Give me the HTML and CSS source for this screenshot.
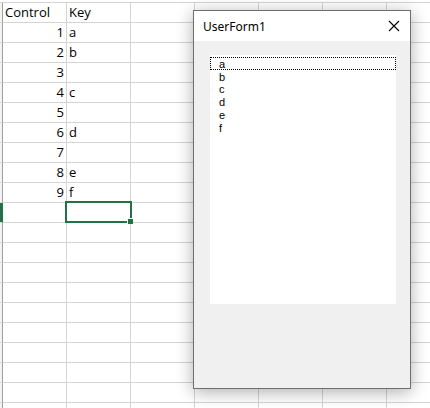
FILE: index.html
```html
<!DOCTYPE html>
<html>
<head>
<meta charset="utf-8">
<link rel="stylesheet" href="styles.css">
</head>
<body>
<div class="sheet">
  <div class="rh"></div><div class="c">Control</div><div class="c">Key</div><div class="c"></div><div class="c"></div><div class="c"></div><div class="c"></div><div class="c"></div>
  <div class="rh"></div><div class="c num">1</div><div class="c">a</div><div class="c"></div><div class="c"></div><div class="c"></div><div class="c"></div><div class="c"></div>
  <div class="rh"></div><div class="c num">2</div><div class="c">b</div><div class="c"></div><div class="c"></div><div class="c"></div><div class="c"></div><div class="c"></div>
  <div class="rh"></div><div class="c num">3</div><div class="c"></div><div class="c"></div><div class="c"></div><div class="c"></div><div class="c"></div><div class="c"></div>
  <div class="rh"></div><div class="c num">4</div><div class="c">c</div><div class="c"></div><div class="c"></div><div class="c"></div><div class="c"></div><div class="c"></div>
  <div class="rh"></div><div class="c num">5</div><div class="c"></div><div class="c"></div><div class="c"></div><div class="c"></div><div class="c"></div><div class="c"></div>
  <div class="rh"></div><div class="c num">6</div><div class="c">d</div><div class="c"></div><div class="c"></div><div class="c"></div><div class="c"></div><div class="c"></div>
  <div class="rh"></div><div class="c num">7</div><div class="c"></div><div class="c"></div><div class="c"></div><div class="c"></div><div class="c"></div><div class="c"></div>
  <div class="rh"></div><div class="c num">8</div><div class="c">e</div><div class="c"></div><div class="c"></div><div class="c"></div><div class="c"></div><div class="c"></div>
  <div class="rh"></div><div class="c num">9</div><div class="c">f</div><div class="c"></div><div class="c"></div><div class="c"></div><div class="c"></div><div class="c"></div>
  <div class="rh active"></div><div class="c"></div><div class="c sel"><span class="selbox"><span class="handle"></span></span></div><div class="c"></div><div class="c"></div><div class="c"></div><div class="c"></div><div class="c"></div>
  <div class="rh"></div><div class="c"></div><div class="c"></div><div class="c"></div><div class="c"></div><div class="c"></div><div class="c"></div><div class="c"></div>
  <div class="rh"></div><div class="c"></div><div class="c"></div><div class="c"></div><div class="c"></div><div class="c"></div><div class="c"></div><div class="c"></div>
  <div class="rh"></div><div class="c"></div><div class="c"></div><div class="c"></div><div class="c"></div><div class="c"></div><div class="c"></div><div class="c"></div>
  <div class="rh"></div><div class="c"></div><div class="c"></div><div class="c"></div><div class="c"></div><div class="c"></div><div class="c"></div><div class="c"></div>
  <div class="rh"></div><div class="c"></div><div class="c"></div><div class="c"></div><div class="c"></div><div class="c"></div><div class="c"></div><div class="c"></div>
  <div class="rh"></div><div class="c"></div><div class="c"></div><div class="c"></div><div class="c"></div><div class="c"></div><div class="c"></div><div class="c"></div>
  <div class="rh"></div><div class="c"></div><div class="c"></div><div class="c"></div><div class="c"></div><div class="c"></div><div class="c"></div><div class="c"></div>
  <div class="rh"></div><div class="c"></div><div class="c"></div><div class="c"></div><div class="c"></div><div class="c"></div><div class="c"></div><div class="c"></div>
  <div class="rh"></div><div class="c"></div><div class="c"></div><div class="c"></div><div class="c"></div><div class="c"></div><div class="c"></div><div class="c"></div>
  <div class="rh"></div><div class="c"></div><div class="c"></div><div class="c"></div><div class="c"></div><div class="c"></div><div class="c"></div><div class="c"></div>
</div>

<div class="form">
  <div class="titlebar">
    <span class="title">UserForm1</span>
    <svg class="close" width="12" height="12" viewBox="0 0 12 12"><path d="M1 1 L11 11 M11 1 L1 11" stroke="#000" stroke-width="1.1" fill="none"/></svg>
  </div>
  <div class="formbody">
    <div class="listbox">
      <div class="item focus">a</div>
      <div class="item">b</div>
      <div class="item">c</div>
      <div class="item">d</div>
      <div class="item">e</div>
      <div class="item">f</div>
    </div>
  </div>
</div>
</body>
</html>
```

FILE: styles.css
```css
* { box-sizing: border-box; }
html, body { margin: 0; padding: 0; }
body {
  width: 430px;
  height: 408px;
  overflow: hidden;
  background: #fff;
  position: relative;
  font-family: "Open Sans", "Liberation Sans", sans-serif;
}
.sheet {
  margin-top: 2px;
  border-top: 1px solid #d4d4d4;
  display: grid;
  grid-template-columns: 3px repeat(7, 64px);
  grid-auto-rows: 20px;
}
.rh {
  background: #f3f3f3;
  border-right: 1px solid #a0a0a0;
  border-bottom: 1px solid #d4d4d4;
}
.rh.active {
  background: #217346;
  border-right-color: #217346;
}
.c {
  border-right: 1px solid #d4d4d4;
  border-bottom: 1px solid #d4d4d4;
  font-size: 13px;
  line-height: 19px;
  padding: 0 2px;
  color: #000;
  white-space: nowrap;
  overflow: visible;
}
.c.num { text-align: right; }
.c.sel { position: relative; }
.selbox {
  position: absolute;
  left: -2px;
  top: -2px;
  right: -2px;
  bottom: -1px;
  border: 2px solid #217346;
}
.handle {
  position: absolute;
  right: -3px;
  bottom: -3px;
  width: 6px;
  height: 6px;
  background: #217346;
  border-left: 1px solid #fff;
  border-top: 1px solid #fff;
}
.form {
  position: absolute;
  left: 193px;
  top: 10px;
  width: 218px;
  height: 379px;
  border: 1px solid #6e6e6e;
  background: #f0f0f0;
  box-shadow: 0 3px 16px rgba(0, 0, 0, 0.32);
  display: flex;
  flex-direction: column;
}
.titlebar {
  height: 30px;
  background: #fff;
  display: flex;
  align-items: center;
  justify-content: space-between;
  padding: 0 10px 0 9px;
}
.title {
  font-family: "Noto Sans", "Open Sans", sans-serif;
  font-size: 12px;
  color: #000;
  padding-top: 1px;
}
.close { display: block; margin-top: 0px; }
.formbody {
  flex: 1;
  padding: 14px 0 0 16px;
}
.listbox {
  width: 186px;
  height: 249px;
  background: #fff;
  padding-top: 2px;
}
.item {
  height: 13px;
  line-height: 12px;
  font-family: "Liberation Sans", Arial, sans-serif;
  font-size: 11px;
  padding-left: 9px;
  color: #000;
  border: 1px solid transparent;
  border-left: none;
  border-right: none;
}
.item + .item { margin-top: -0.3px; }
.item.focus {
  border: 1px dotted #000;
  padding-left: 8px;
}
```
